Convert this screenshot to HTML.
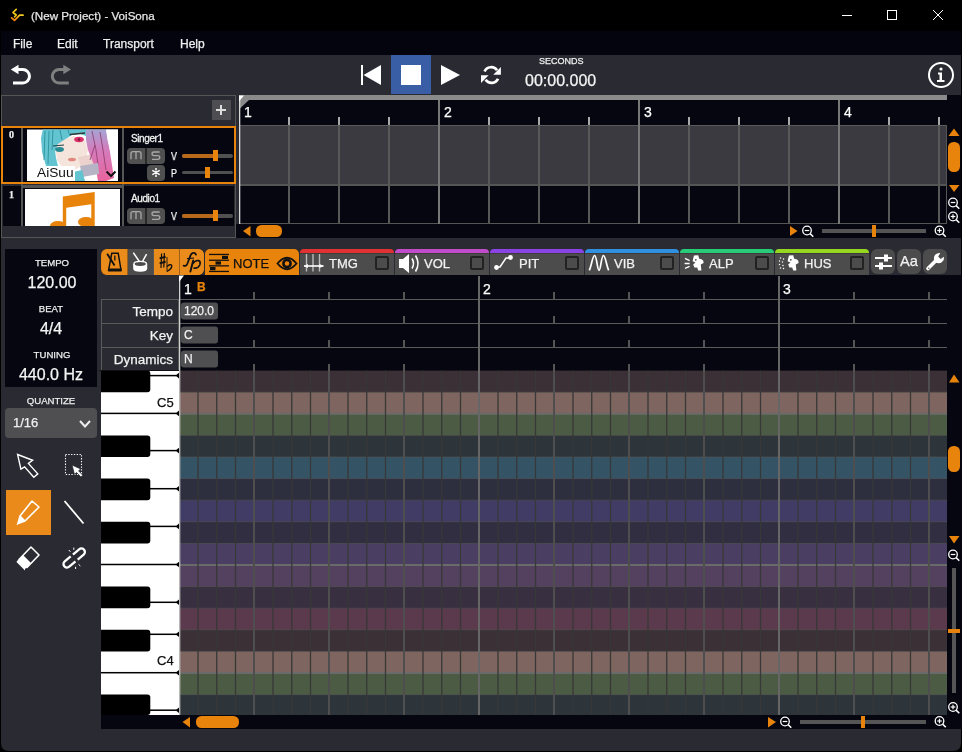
<!DOCTYPE html><html><head><meta charset="utf-8"><style>
html,body{margin:0;padding:0;}
body{width:962px;height:752px;position:relative;overflow:hidden;background:#000;font-family:"Liberation Sans",sans-serif;}
.t{position:absolute;white-space:nowrap;line-height:1;will-change:transform;-webkit-text-stroke:0.25px currentColor;}
svg{position:absolute;overflow:visible;}
</style></head><body>
<svg style="left:0;top:0" width="962" height="31">
<defs><linearGradient id="lg" x1="0" y1="1" x2="1" y2="0"><stop offset="0" stop-color="#f07810"/><stop offset="1" stop-color="#f0d020"/></linearGradient></defs>
<path d="M16.2 9.4 L13 12.5 L16.2 15 L14.6 16.8" stroke="#f0c818" stroke-width="1.7" fill="none" stroke-linecap="round" stroke-linejoin="round"/>
<path d="M11.6 17.9 L14.5 20.4 L19.6 15.2 L23 15.2" stroke="url(#lg)" stroke-width="1.8" fill="none" stroke-linecap="round" stroke-linejoin="round"/>
<line x1="842" y1="15.5" x2="852" y2="15.5" stroke="#fff" stroke-width="1"/>
<rect x="887.5" y="10.5" width="9" height="9" stroke="#fff" stroke-width="1" fill="none"/>
<path d="M933 10 L943 20 M943 10 L933 20" stroke="#fff" stroke-width="1"/>
</svg>
<div class="t" style="left:31px;top:10px;font-size:11.6px;color:#e6e6e6;">(New Project) - VoiSona</div>
<div style="position:absolute;left:1px;top:31px;width:960px;height:24px;background:#04040e;"></div>
<div class="t" style="left:13px;top:38px;font-size:12px;color:#f0f0f0;">File</div>
<div class="t" style="left:57px;top:38px;font-size:12px;color:#f0f0f0;">Edit</div>
<div class="t" style="left:103px;top:38px;font-size:12px;color:#f0f0f0;">Transport</div>
<div class="t" style="left:180px;top:38px;font-size:12px;color:#f0f0f0;">Help</div>
<div style="position:absolute;left:1px;top:55px;width:960px;height:40px;background:#2a2a32;"></div>
<svg style="left:0;top:55" width="962" height="40">
<path d="M17 14.5 L22.75 14.5 A 6.75 6.75 0 0 1 22.75 28 L13 28" stroke="#fff" stroke-width="3" fill="none"/>
<path d="M10.8 14.5 L18.5 9.8 L18.5 19.2 Z" fill="#fff"/>
<path d="M64.8 14.5 L59.05 14.5 A 6.75 6.75 0 0 0 59.05 28 L68.8 28" stroke="#808080" stroke-width="3" fill="none"/>
<path d="M71 14.5 L63.3 9.8 L63.3 19.2 Z" fill="#808080"/>
</svg>
<div style="position:absolute;left:391px;top:55px;width:40px;height:39px;background:#3a5ea6;"></div>
<svg style="left:0;top:55" width="962" height="40">
<rect x="361" y="10" width="2" height="20" fill="#fff"/>
<path d="M363.5 20 L381 10 L381 30 Z" fill="#fff"/>
<rect x="401" y="10" width="20" height="20" fill="#fff"/>
<path d="M441 10 L460 20 L441 30 Z" fill="#fff"/>
<path d="M484.6 16.4 A 7 6.6 0 0 1 497 15.2" stroke="#fff" stroke-width="2.7" fill="none"/>
<path d="M500.9 12 L500.9 19.8 L493.3 19.8 Z" fill="#fff"/>
<path d="M498 23.8 A 7 6.6 0 0 1 485.6 24.8" stroke="#fff" stroke-width="2.7" fill="none"/>
<path d="M481 20.3 L481 28 L488.6 20.3 Z" fill="#fff"/>
<circle cx="941" cy="20" r="12" stroke="#fff" stroke-width="2" fill="none"/>
<circle cx="941" cy="14" r="1.6" fill="#fff"/>
<path d="M938 17.5 L942 17.5 L942 25 L944.5 25 L944.5 27 L937 27 L937 25 L939.5 25 L939.5 19.5 L938 19.5 Z" fill="#fff"/>
</svg>
<div class="t" style="left:538.5px;top:57px;font-size:9px;color:#f0f0f0;">SECONDS</div>
<div class="t" style="left:525px;top:72.5px;font-size:16px;color:#f4f4f4;">00:00.000</div>
<div style="position:absolute;left:1px;top:95px;width:960px;height:143px;background:#05060f;"></div>
<div style="position:absolute;left:1px;top:95px;width:235px;height:143px;background:#2a2a32;"></div>
<div style="position:absolute;left:1px;top:95px;width:235px;height:1px;background:#555;"></div>
<div style="position:absolute;left:1px;top:95px;width:1px;height:143px;background:#555;"></div>
<div style="position:absolute;left:235px;top:95px;width:1px;height:143px;background:#555;"></div>
<div style="position:absolute;left:236px;top:95px;width:3px;height:143px;background:#2a2a32;"></div>
<div style="position:absolute;left:212px;top:100px;width:19px;height:20px;background:#4d4d52;"></div>
<div style="position:absolute;left:216px;top:109px;width:10px;height:2px;background:#ddd;"></div>
<div style="position:absolute;left:220px;top:105px;width:2px;height:10px;background:#ddd;"></div>
<div style="position:absolute;left:1px;top:126px;width:235px;height:58px;background:#e8830c;"></div>
<div style="position:absolute;left:3px;top:128px;width:231px;height:54px;background:#05060f;"></div>
<div style="position:absolute;left:21px;top:128px;width:2px;height:54px;background:#555;"></div>
<div style="position:absolute;left:122px;top:128px;width:2px;height:54px;background:#555;"></div>
<div class="t" style="left:8.5px;top:130px;font-size:10px;color:#eee;font-family:'Liberation Serif',serif;font-weight:bold">0</div>
<svg style="left:0;top:0" width="240" height="240">
<defs><clipPath id="ic"><rect x="27" y="129.5" width="91" height="51.5"/></clipPath>
<linearGradient id="pg" x1="0" y1="0" x2="0" y2="1"><stop offset="0" stop-color="#a4a6d4"/><stop offset="0.4" stop-color="#d47cbc"/><stop offset="1" stop-color="#e8649e"/></linearGradient></defs>
<rect x="27" y="129.5" width="91" height="51.5" fill="#fff"/>
<g clip-path="url(#ic)">
<path d="M55 144 L64 139 L74 136 L85 140 L88 150 L86 158 L82 166 L72 171 L62 167 L57 160 Z" fill="#f4e4dc"/>
<path d="M78 157 L93 154 L97 167 L82 171 Z" fill="#ecd2cc"/>
<path d="M43 129 L88 129 L86 136 L80 134 L72 135 L64 140 L58 144 L55 150 L56 158 L58 166 L52 170 L46 166 L42 152 L41 138 Z" fill="#62c4d0"/>
<path d="M45 131 L44 160 M49 131 L48 164 M53 130 L52 150 M60 130 L62 140 M68 130 L70 136" stroke="#2e8e98" stroke-width="0.9" fill="none"/>
<path d="M86 129 L106 129 L108 140 L110 152 L112 165 L114 178 L106 181 L98 181 L96 170 L92 160 L88 150 L86 140 Z" fill="url(#pg)"/>
<path d="M92 131 L96 150 L98 165 M100 132 L103 150 L106 170 M95 145 L90 160" stroke="#8a3a6a" stroke-width="0.8" fill="none"/>
<path d="M106 129 L118 129 L118 156 L110 150 L107.5 140 Z" fill="#fff"/>
<path d="M112 158 L118 160 L118 170 L114 168 Z" fill="#fff"/>
<path d="M80 166 L98 163 L99 174 L82 177 Z" fill="#b6b4c4"/>
<path d="M73 172 L82 170 L85 181 L71 181 Z" fill="#62c4d0"/>
<path d="M70 134.5 L85 133" stroke="#333" stroke-width="1.3"/>
<ellipse cx="79" cy="139.5" rx="4.8" ry="2.8" fill="#d8306a"/>
<circle cx="79" cy="139.5" r="1.2" fill="#801838"/>
<path d="M53 146 L64 145" stroke="#244248" stroke-width="1.2"/>
<ellipse cx="59.5" cy="149.5" rx="4.4" ry="2.4" fill="#2a8a94"/>
<ellipse cx="72" cy="159.5" rx="4" ry="1.8" fill="#e0887c"/>
</g>
<rect x="37" y="166" width="38" height="15" fill="#fff"/>
<path d="M106.5 171.5 L111 176 L115.5 171.5" stroke="#111" stroke-width="2" fill="none"/>
</svg>
<div class="t" style="left:37px;top:165.5px;font-size:13.7px;color:#111;-webkit-text-stroke:0">AiSuu</div>
<div class="t" style="left:131px;top:133.5px;font-size:10px;color:#f2f2f2;-webkit-text-stroke:0.3px #f2f2f2;letter-spacing:-0.4px">Singer1</div>
<div style="position:absolute;left:127px;top:148px;width:38px;height:16px;background:#505050;border-radius:4px"></div>
<div style="position:absolute;left:145.2px;top:148px;width:1.5px;height:16px;background:#2a2a2a;"></div>
<div style="position:absolute;left:147px;top:165px;width:18px;height:16px;background:#505050;border-radius:4px"></div>
<svg style="left:0;top:0" width="240" height="240">
<path d="M131 159.2 L131 153.6 Q 131 151.6 133 151.6 L139 151.6 Q 141 151.6 141 153.6 L141 159.2 M136 152 L136 159.2" stroke="#a8a8a8" stroke-width="1.3" fill="none"/>
<path d="M159.6 152 L154 152 Q 152 152 152 153.8 Q 152 155.6 154 155.6 L157.8 155.6 Q 159.8 155.6 159.8 157.5 Q 159.8 159.3 157.8 159.3 L152 159.3" stroke="#a8a8a8" stroke-width="1.3" fill="none"/>
<path d="M152.3 170.4 L159.7 174.6 M159.7 170.4 L152.3 174.6 M156 170.5 L156 174.5" stroke="#fff" stroke-width="1.3"/>
<circle cx="156" cy="168.9" r="1" fill="#fff"/><circle cx="156" cy="176.1" r="1" fill="#fff"/>
</svg>
<div class="t" style="left:170.6px;top:150.8px;font-size:10.5px;color:#fff;transform:scaleX(0.85);transform-origin:left">V</div>
<div class="t" style="left:170.6px;top:168.2px;font-size:10.5px;color:#fff;transform:scaleX(0.85);transform-origin:left">P</div>
<div style="position:absolute;left:182px;top:154px;width:51px;height:4px;background:#505050;border-radius:2px"></div>
<div style="position:absolute;left:182px;top:154px;width:33px;height:4px;background:#b86a1a;border-radius:2px"></div>
<div style="position:absolute;left:213px;top:150px;width:5px;height:11px;background:#e8830c;"></div>
<div style="position:absolute;left:182px;top:171px;width:51px;height:3px;background:#505050;border-radius:2px"></div>
<div style="position:absolute;left:205px;top:167px;width:5px;height:11px;background:#e8830c;"></div>
<div style="position:absolute;left:3px;top:186px;width:231px;height:40px;background:#05060f;"></div>
<div style="position:absolute;left:21px;top:184px;width:2px;height:42px;background:#555;"></div>
<div style="position:absolute;left:122px;top:184px;width:2px;height:42px;background:#555;"></div>
<div style="position:absolute;left:23px;top:185px;width:99px;height:3px;background:#555;"></div>
<div class="t" style="left:9px;top:190px;font-size:10px;color:#eee;font-family:'Liberation Serif',serif;font-weight:bold">1</div>
<div style="position:absolute;left:25px;top:189px;width:95px;height:37px;background:#fff;"></div>
<svg style="left:0;top:0" width="240" height="240">
<path d="M64.5 226 L64.5 198 L93 194 L93 226" stroke="#e8830c" stroke-width="3.4" fill="none"/>
<path d="M64.5 198 L93 194 L93 204 L64.5 208 Z" fill="#e8830c"/>
<ellipse cx="58" cy="226" rx="8" ry="5" fill="#e8830c"/>
<ellipse cx="86" cy="222" rx="8" ry="5" fill="#e8830c"/>
</svg>
<div class="t" style="left:131px;top:193.5px;font-size:10px;color:#f2f2f2;-webkit-text-stroke:0.3px #f2f2f2;letter-spacing:-0.4px">Audio1</div>
<div style="position:absolute;left:127px;top:208px;width:38px;height:16px;background:#505050;border-radius:4px"></div>
<div style="position:absolute;left:145.2px;top:208px;width:1.5px;height:16px;background:#2a2a2a;"></div>
<svg style="left:0;top:0" width="240" height="240">
<path d="M131 219.2 L131 213.6 Q 131 211.6 133 211.6 L139 211.6 Q 141 211.6 141 213.6 L141 219.2 M136 212 L136 219.2" stroke="#a8a8a8" stroke-width="1.3" fill="none"/>
<path d="M159.6 212 L154 212 Q 152 212 152 213.8 Q 152 215.6 154 215.6 L157.8 215.6 Q 159.8 215.6 159.8 217.5 Q 159.8 219.3 157.8 219.3 L152 219.3" stroke="#a8a8a8" stroke-width="1.3" fill="none"/>
</svg>
<div class="t" style="left:170.6px;top:210.8px;font-size:10.5px;color:#fff;transform:scaleX(0.85);transform-origin:left">V</div>
<div style="position:absolute;left:182px;top:214px;width:51px;height:4px;background:#505050;border-radius:2px"></div>
<div style="position:absolute;left:182px;top:214px;width:33px;height:4px;background:#b86a1a;border-radius:2px"></div>
<div style="position:absolute;left:213px;top:210px;width:5px;height:11px;background:#e8830c;"></div>
<div style="position:absolute;left:2px;top:226px;width:233px;height:11px;background:#2a2a32;"></div>
<div style="position:absolute;left:1px;top:237px;width:235px;height:1px;background:#555;"></div>
<div style="position:absolute;left:236px;top:224px;width:725px;height:14px;background:#05060f;"></div>
<svg style="left:0;top:0" width="962" height="240"><path d="M239 95 L947 95 L947 100 L249 100 L240 108.5 L239 108.5 Z" fill="#8a8a8a"/><rect x="239" y="126" width="708" height="58" fill="#3a3a40"/><rect x="239" y="125" width="708" height="1" fill="#5a5a5a"/><rect x="239" y="184" width="708" height="2" fill="#555"/><rect x="239" y="223" width="708" height="1" fill="#555"/><rect x="946" y="125" width="1" height="99" fill="#555"/><rect x="288" y="117" width="2" height="8" fill="#aaa"/><rect x="288" y="126" width="2" height="97" fill="#585858"/><rect x="338" y="117" width="2" height="8" fill="#aaa"/><rect x="338" y="126" width="2" height="97" fill="#585858"/><rect x="388" y="117" width="2" height="8" fill="#aaa"/><rect x="388" y="126" width="2" height="97" fill="#585858"/><rect x="438" y="100" width="2" height="124" fill="#777"/><rect x="488" y="117" width="2" height="8" fill="#aaa"/><rect x="488" y="126" width="2" height="97" fill="#585858"/><rect x="538" y="117" width="2" height="8" fill="#aaa"/><rect x="538" y="126" width="2" height="97" fill="#585858"/><rect x="588" y="117" width="2" height="8" fill="#aaa"/><rect x="588" y="126" width="2" height="97" fill="#585858"/><rect x="638" y="100" width="2" height="124" fill="#777"/><rect x="688" y="117" width="2" height="8" fill="#aaa"/><rect x="688" y="126" width="2" height="97" fill="#585858"/><rect x="738" y="117" width="2" height="8" fill="#aaa"/><rect x="738" y="126" width="2" height="97" fill="#585858"/><rect x="788" y="117" width="2" height="8" fill="#aaa"/><rect x="788" y="126" width="2" height="97" fill="#585858"/><rect x="838" y="100" width="2" height="124" fill="#777"/><rect x="888" y="117" width="2" height="8" fill="#aaa"/><rect x="888" y="126" width="2" height="97" fill="#585858"/><rect x="938" y="117" width="2" height="8" fill="#aaa"/><rect x="938" y="126" width="2" height="97" fill="#585858"/><rect x="239" y="100" width="1.3" height="124" fill="#d8d8d8"/><path d="M239 95.5 L244 95.5 L239 101.5 Z" fill="#fff"/><path d="M243 231 L250.5 226 L250.5 236.5 Z" fill="#e8830c"/><rect x="256" y="225" width="26" height="12" rx="5.5" fill="#e8830c"/><path d="M790 226 L797.5 231 L790 236 Z" fill="#e8830c"/><rect x="822" y="229" width="104" height="4" fill="#555"/><rect x="872" y="225" width="4" height="12" fill="#e8830c"/><path d="M948.5 136 L954 128.5 L959.5 136 Z" fill="#e8830c"/><rect x="948" y="142" width="12" height="30" rx="5.5" fill="#e8830c"/><path d="M949 185 L959.5 185 L954 192 Z" fill="#e8830c"/></svg>
<div class="t" style="left:244px;top:105px;font-size:14px;color:#fff;">1</div>
<div class="t" style="left:444px;top:105px;font-size:14px;color:#fff;">2</div>
<div class="t" style="left:644px;top:105px;font-size:14px;color:#fff;">3</div>
<div class="t" style="left:844px;top:105px;font-size:14px;color:#fff;">4</div>
<svg style="left:0;top:0" width="962" height="752"><circle cx="807" cy="230.5" r="4.3" stroke="#fff" stroke-width="1.3" fill="none"/><line x1="810.096" y1="233.596" x2="813.296" y2="236.796" stroke="#fff" stroke-width="1.5"/><line x1="804.7" y1="230.5" x2="809.3" y2="230.5" stroke="#fff" stroke-width="1.2"/><circle cx="939.5" cy="230.5" r="4.3" stroke="#fff" stroke-width="1.3" fill="none"/><line x1="942.596" y1="233.596" x2="945.796" y2="236.796" stroke="#fff" stroke-width="1.5"/><line x1="937.2" y1="230.5" x2="941.8" y2="230.5" stroke="#fff" stroke-width="1.2"/><line x1="939.5" y1="228.2" x2="939.5" y2="232.8" stroke="#fff" stroke-width="1.2"/><circle cx="953" cy="202.5" r="4.3" stroke="#fff" stroke-width="1.3" fill="none"/><line x1="956.096" y1="205.596" x2="959.296" y2="208.796" stroke="#fff" stroke-width="1.5"/><line x1="950.7" y1="202.5" x2="955.3" y2="202.5" stroke="#fff" stroke-width="1.2"/><circle cx="953" cy="216.5" r="4.3" stroke="#fff" stroke-width="1.3" fill="none"/><line x1="956.096" y1="219.596" x2="959.296" y2="222.796" stroke="#fff" stroke-width="1.5"/><line x1="950.7" y1="216.5" x2="955.3" y2="216.5" stroke="#fff" stroke-width="1.2"/><line x1="953" y1="214.2" x2="953" y2="218.8" stroke="#fff" stroke-width="1.2"/></svg>
<div style="position:absolute;left:1px;top:238px;width:960px;height:513px;background:#2a2a32;"></div>
<div style="position:absolute;left:5px;top:249px;width:92px;height:138px;background:#05060f;"></div>
<div class="t" style="left:-48.5px;width:200px;text-align:center;top:258px;font-size:9.6px;color:#eee;">TEMPO</div>
<div class="t" style="left:-48.5px;width:200px;text-align:center;top:275px;font-size:16px;color:#f4f4f4;">120.00</div>
<div class="t" style="left:-49px;width:200px;text-align:center;top:304px;font-size:9.6px;color:#eee;">BEAT</div>
<div class="t" style="left:-49px;width:200px;text-align:center;top:321px;font-size:16px;color:#f4f4f4;">4/4</div>
<div class="t" style="left:-48.5px;width:200px;text-align:center;top:350px;font-size:9.6px;color:#eee;">TUNING</div>
<div class="t" style="left:-49px;width:200px;text-align:center;top:367px;font-size:16px;color:#f4f4f4;">440.0 Hz</div>
<div class="t" style="left:-49px;width:200px;text-align:center;top:396px;font-size:9.6px;color:#eee;">QUANTIZE</div>
<div style="position:absolute;left:5px;top:408px;width:92px;height:30px;background:#4f4f52;border-radius:4px"></div>
<div class="t" style="left:13px;top:416px;font-size:13px;color:#f0f0f0;">1/16</div>
<svg style="left:0;top:0" width="962" height="752">
<path d="M80 421 L85 426.5 L90 421" stroke="#eee" stroke-width="2" fill="none"/>
</svg>
<div style="position:absolute;left:5.5px;top:489.5px;width:45.5px;height:45px;background:#e98a1b;"></div>
<svg style="left:0;top:0" width="120" height="600">
<path d="M17.6 454.5 L32.6 460.3 L28.4 463.4 L37.8 473.9 L33.8 477.3 L24.6 466.9 L20.9 469.2 Z" stroke="#fff" stroke-width="1.4" fill="none" stroke-linejoin="miter"/>
<rect x="65.5" y="454.5" width="16" height="20" stroke="#fff" stroke-width="1.1" stroke-dasharray="1.3 1.5" fill="none"/>
<path d="M72 465 L80.8 469 L78.6 470.8 L82.8 475.2 L80.8 477 L76.6 472.6 L74.5 474.4 Z" fill="#fff" stroke="#2a2a32" stroke-width="0.8"/>
<path d="M32 501 L39 507 L25 521 L18 523.5 L20 516 Z" stroke="#fff" stroke-width="1.6" fill="none" stroke-linejoin="round"/>
<path d="M20 516 L25 521 M18 523.5 L21 518 L23.5 520.5 Z" stroke="#fff" stroke-width="1.4" fill="#fff"/>
<line x1="64.5" y1="501" x2="83.5" y2="523.5" stroke="#fff" stroke-width="1.8"/>
<path d="M31 547 L39 555 L27 567.5 L19 559.5 Z" stroke="#fff" stroke-width="1.6" fill="none" stroke-linejoin="round"/>
<path d="M17 561 L25 569 L25 570.5 L16.5 562 Z M17 561 L23 555 L31 563 L25 569 Z" fill="#fff"/>
<g transform="translate(74.2 558) rotate(-40)">
<path d="M 0.6 -3.5 L -9.4 -3.5 A 3.5 3.5 0 0 0 -9.4 3.5 L -1.2 3.5" stroke="#fff" stroke-width="2.3" fill="none"/>
<path d="M 1.2 -3.5 L 9.4 -3.5 A 3.5 3.5 0 0 1 9.4 3.5 L -0.6 3.5" stroke="#fff" stroke-width="2.3" fill="none"/>
<rect x="-1.6" y="-5" width="2.6" height="3" fill="#2a2a32"/>
<rect x="-1" y="2" width="2.6" height="3" fill="#2a2a32"/>
</g>
<path d="M68.8 550 L70.4 551.8 M73.8 547.6 L73.8 549.8 M75.6 566.8 L75.6 569 M78.6 564.4 L80.4 566" stroke="#fff" stroke-width="1"/>
</svg>
<div style="position:absolute;left:101px;top:249px;width:103px;height:26px;background:#e8830c;border-radius:6px"></div>
<div style="position:absolute;left:101.5px;top:249px;width:25px;height:26px;background:#ea8c1c;border-radius:6px 0 0 6px"></div>
<div style="position:absolute;left:127.5px;top:249px;width:25px;height:26px;background:#4c4c4c;"></div>
<div style="position:absolute;left:153.5px;top:249px;width:25px;height:26px;background:#ea8c1c;"></div>
<div style="position:absolute;left:179.5px;top:249px;width:24.5px;height:26px;background:#ea8c1c;border-radius:0 6px 6px 0"></div>
<div style="position:absolute;left:126.5px;top:249px;width:1px;height:26px;background:#a0601a;"></div>
<div style="position:absolute;left:152.5px;top:249px;width:1px;height:26px;background:#555;"></div>
<div style="position:absolute;left:178.5px;top:249px;width:1px;height:26px;background:#a0601a;"></div>
<div style="position:absolute;left:205px;top:249px;width:94px;height:26px;background:#e8830c;border-radius:5px 5px 0 0"></div>
<div style="position:absolute;left:300px;top:249px;width:94px;height:26px;background:#4c4c4c;border-radius:5px 5px 0 0"></div>
<div style="position:absolute;left:300px;top:249px;width:94px;height:4px;background:#e03232;border-radius:5px 5px 0 0"></div>
<div style="position:absolute;left:300px;top:253px;width:94px;height:1px;background:#3e3a3a;"></div>
<div style="position:absolute;left:395px;top:249px;width:94px;height:26px;background:#4c4c4c;border-radius:5px 5px 0 0"></div>
<div style="position:absolute;left:395px;top:249px;width:94px;height:4px;background:#c04ccc;border-radius:5px 5px 0 0"></div>
<div style="position:absolute;left:395px;top:253px;width:94px;height:1px;background:#3e3a3a;"></div>
<div style="position:absolute;left:490px;top:249px;width:94px;height:26px;background:#4c4c4c;border-radius:5px 5px 0 0"></div>
<div style="position:absolute;left:490px;top:249px;width:94px;height:4px;background:#8a44e6;border-radius:5px 5px 0 0"></div>
<div style="position:absolute;left:490px;top:253px;width:94px;height:1px;background:#3e3a3a;"></div>
<div style="position:absolute;left:585px;top:249px;width:94px;height:26px;background:#4c4c4c;border-radius:5px 5px 0 0"></div>
<div style="position:absolute;left:585px;top:249px;width:94px;height:4px;background:#3090e0;border-radius:5px 5px 0 0"></div>
<div style="position:absolute;left:585px;top:253px;width:94px;height:1px;background:#3e3a3a;"></div>
<div style="position:absolute;left:680px;top:249px;width:94px;height:26px;background:#4c4c4c;border-radius:5px 5px 0 0"></div>
<div style="position:absolute;left:680px;top:249px;width:94px;height:4px;background:#28cc78;border-radius:5px 5px 0 0"></div>
<div style="position:absolute;left:680px;top:253px;width:94px;height:1px;background:#3e3a3a;"></div>
<div style="position:absolute;left:775px;top:249px;width:94px;height:26px;background:#4c4c4c;border-radius:5px 5px 0 0"></div>
<div style="position:absolute;left:775px;top:249px;width:94px;height:4px;background:#96d820;border-radius:5px 5px 0 0"></div>
<div style="position:absolute;left:775px;top:253px;width:94px;height:1px;background:#3e3a3a;"></div>
<div style="position:absolute;left:871px;top:249px;width:24px;height:25px;background:#4c4c4c;border-radius:6px"></div>
<div style="position:absolute;left:897px;top:249px;width:24px;height:25px;background:#4c4c4c;border-radius:6px"></div>
<div style="position:absolute;left:923px;top:249px;width:24px;height:25px;background:#4c4c4c;border-radius:6px"></div>
<div class="t" style="left:232.8px;top:257px;font-size:13px;color:#111;">NOTE</div>
<div class="t" style="left:329px;top:257px;font-size:13px;color:#f2f2f2;">TMG</div>
<div style="position:absolute;left:375px;top:256px;width:14px;height:14px;background:#4c4c4c;box-sizing:border-box;border:2px solid #222;border-radius:2px"></div>
<div class="t" style="left:424px;top:257px;font-size:13px;color:#f2f2f2;">VOL</div>
<div style="position:absolute;left:470px;top:256px;width:14px;height:14px;background:#4c4c4c;box-sizing:border-box;border:2px solid #222;border-radius:2px"></div>
<div class="t" style="left:519px;top:257px;font-size:13px;color:#f2f2f2;">PIT</div>
<div style="position:absolute;left:565px;top:256px;width:14px;height:14px;background:#4c4c4c;box-sizing:border-box;border:2px solid #222;border-radius:2px"></div>
<div class="t" style="left:614px;top:257px;font-size:13px;color:#f2f2f2;">VIB</div>
<div style="position:absolute;left:660px;top:256px;width:14px;height:14px;background:#4c4c4c;box-sizing:border-box;border:2px solid #222;border-radius:2px"></div>
<div class="t" style="left:709px;top:257px;font-size:13px;color:#f2f2f2;">ALP</div>
<div style="position:absolute;left:755px;top:256px;width:14px;height:14px;background:#4c4c4c;box-sizing:border-box;border:2px solid #222;border-radius:2px"></div>
<div class="t" style="left:804px;top:257px;font-size:13px;color:#f2f2f2;">HUS</div>
<div style="position:absolute;left:850px;top:256px;width:14px;height:14px;background:#4c4c4c;box-sizing:border-box;border:2px solid #222;border-radius:2px"></div>
<div class="t" style="left:900px;top:253.5px;font-size:14.6px;color:#f2f2f2;">Aa</div>
<svg style="left:0;top:0" width="962" height="300">
<!-- metronome -->
<path d="M111.8 253.2 L118.2 253.2 L121 270 L108.6 270 Z" stroke="#111" stroke-width="1.5" fill="none" stroke-linejoin="miter"/>
<path d="M108.4 268.4 L121.4 268.4 L121.6 271.4 L108.2 271.4 Z" fill="#111"/>
<rect x="114.2" y="255.5" width="1.3" height="5" fill="#111"/>
<line x1="107.2" y1="253.8" x2="114.6" y2="265.4" stroke="#111" stroke-width="1.9"/>
<!-- drum -->
<line x1="133.3" y1="252.6" x2="140" y2="262.5" stroke="#fff" stroke-width="1.5"/>
<line x1="146.6" y1="254.2" x2="140.8" y2="264.5" stroke="#fff" stroke-width="1.5"/>
<path d="M133.2 264 L133.2 268.5 Q 133.2 271.8 140.2 271.8 Q 147.2 271.8 147.2 268.5 L147.2 264 Z" fill="#fff"/>
<ellipse cx="140.2" cy="264" rx="6.3" ry="2.6" stroke="#fff" stroke-width="1.4" fill="#4c4c4c"/>
<!-- NOTE icon -->
<rect x="209" y="253.8" width="20" height="1.3" fill="#111"/>
<rect x="209" y="259.6" width="20" height="1.3" fill="#111"/>
<rect x="209" y="265.2" width="20" height="1.3" fill="#111"/>
<rect x="209" y="270.8" width="20" height="1.3" fill="#111"/>
<rect x="222" y="255.8" width="6" height="3.2" fill="#111"/>
<rect x="215.5" y="261.4" width="5.5" height="3.2" fill="#111"/>
<rect x="210" y="267" width="5.5" height="3.2" fill="#111"/>
<!-- eye -->
<path d="M277.5 263.5 Q 287 252 296.5 263.5 Q 287 275 277.5 263.5 Z" stroke="#111" stroke-width="1.8" fill="none"/>
<circle cx="287" cy="263.5" r="3.6" fill="none" stroke="#111" stroke-width="2.6"/>
<!-- TMG -->
<path d="M306.5 254 L306.5 271.5 M313 254 L313 271.5 M319.5 254 L319.5 271.5" stroke="#bbb" stroke-width="1.4"/>
<path d="M304 266 L323.5 266" stroke="#fff" stroke-width="1.6"/>
<path d="M304 266 L308 264 L308 268 Z M323.5 266 L319.5 264 L319.5 268 Z" fill="#fff"/>
<!-- VOL speaker -->
<path d="M399 259 L403 259 L409 254 L409 273 L403 268 L399 268 Z" fill="#fff"/>
<path d="M412 258.5 Q 415 263.5 412 268.5" stroke="#fff" stroke-width="1.6" fill="none"/>
<path d="M415.5 255.5 Q 420.5 263.5 415.5 271.5" stroke="#fff" stroke-width="1.6" fill="none"/>
<!-- PIT -->
<path d="M496 267 L500 267 L506 258 L510 258" stroke="#fff" stroke-width="1.5" fill="none"/>
<circle cx="496.5" cy="267.5" r="2.4" fill="#fff"/>
<circle cx="510.5" cy="257.5" r="2.4" fill="#fff"/>
<!-- VIB -->
<path d="M589.3 270.3 C 591.5 266, 592.5 255.5, 594.6 255.5 C 596.8 255.5, 597.2 270.3, 599 270.3 C 600.8 270.3, 601.3 255.5, 603.4 255.5 C 605.5 255.5, 606.5 266, 608.7 270.3" stroke="#fff" stroke-width="1.7" fill="none"/>
<!-- ALP -->
<path d="M685 258.3 L689.6 260.6 M684.6 263.5 L689.6 263.5 M685 268.4 L689.6 266.4" stroke="#fff" stroke-width="1.3"/>
<path d="M694 255.5 L698.2 255.3 L699.2 258.8 L701.6 259.3 Q 704 260.3 703.6 263 L700.8 264.6 L701.4 270.6 L698.2 270.6 L697.2 267.4 L694.4 267.6 L693.2 264.6 L695.4 262.6 L692.6 261.2 L693.2 258.6 Z" fill="#fff"/>
<circle cx="695.8" cy="259.8" r="0.9" fill="#4c4c4c"/>
<!-- HUS -->
<circle cx="780.5" cy="258" r="0.75" fill="#fff"/><circle cx="783.5" cy="259" r="0.75" fill="#fff"/><circle cx="779.5" cy="261" r="0.75" fill="#fff"/><circle cx="782.5" cy="262" r="0.75" fill="#fff"/><circle cx="779.5" cy="264.5" r="0.75" fill="#fff"/><circle cx="783" cy="265.5" r="0.75" fill="#fff"/><circle cx="780.5" cy="268" r="0.75" fill="#fff"/><circle cx="783.5" cy="268.5" r="0.75" fill="#fff"/>
<path d="M789 255.5 L793.2 255.3 L794.2 258.8 L796.6 259.3 Q 799 260.3 798.6 263 L795.8 264.6 L796.4 270.6 L793.2 270.6 L792.2 267.4 L789.4 267.6 L788.2 264.6 L790.4 262.6 L787.6 261.2 L788.2 258.6 Z" fill="#fff"/>
<circle cx="790.8" cy="259.8" r="0.9" fill="#4c4c4c"/>
<!-- sliders -->
<path d="M875 258 L892 258 M875 266 L892 266" stroke="#fff" stroke-width="2"/>
<rect x="884" y="254.5" width="4" height="7" fill="#fff"/>
<rect x="879" y="262.5" width="4" height="7" fill="#fff"/>
<!-- wrench -->
<path d="M928 268.5 L936 260.5" stroke="#fff" stroke-width="3.6" stroke-linecap="round"/>
<circle cx="928.8" cy="268.2" r="0.7" fill="#4c4c4c"/>
<path d="M935 262 Q 932.5 257.5 935.5 254.5 Q 937.5 252.5 940.3 253 L 938.2 256.5 L 940.5 259 L 944 256.8 Q 944.5 260 942 262 Q 939 264.5 935 262 Z" fill="#fff"/>
</svg>
<svg style="left:0;top:0" width="962" height="300">
<path d="M161.6 253.5 L161 268 M164.4 253 L163.8 267.5" stroke="#111" stroke-width="1.2"/>
<path d="M159.6 258.4 L165.6 256.8 M159.6 263.4 L165.6 261.8" stroke="#111" stroke-width="2"/>
<path d="M167 257 L167 271.5" stroke="#111" stroke-width="0.9"/>
<path d="M167 266.5 Q 170.5 263.5 171.8 265.5 Q 172.2 268.5 167 271.5" stroke="#111" stroke-width="1.3" fill="none"/>
<path d="M196 254.6 Q 195 252.2 192.6 253 Q 190.6 254 189.6 258 L 187.2 264 Q 186 266.8 183.6 265.6" stroke="#111" stroke-width="1.8" fill="none" stroke-linecap="round"/>
<path d="M187 258.6 L194 258" stroke="#111" stroke-width="1.1"/>
<path d="M193.2 260.5 L190.4 271.5" stroke="#111" stroke-width="1.9" stroke-linecap="round"/>
<path d="M192.6 263.8 Q 195.5 260 198.6 260.6 Q 201 261.6 199.8 265 Q 198 268.8 193.4 268" stroke="#111" stroke-width="1.6" fill="none"/>
</svg>
<div style="position:absolute;left:179px;top:275px;width:783px;height:454px;background:#05060f;"></div>
<div style="position:absolute;left:101px;top:715px;width:861px;height:14px;background:#05060f;"></div>
<div style="position:absolute;left:101px;top:299px;width:78px;height:25px;background:#2a2a32;box-sizing:border-box;border:1px solid #5a5a5a"></div>
<div class="t" style="left:101px;width:72px;text-align:right;top:304.6px;font-size:13.5px;color:#f2f2f2">Tempo</div>
<div style="position:absolute;left:101px;top:323px;width:78px;height:25px;background:#2a2a32;box-sizing:border-box;border:1px solid #5a5a5a"></div>
<div class="t" style="left:101px;width:72px;text-align:right;top:328.6px;font-size:13.5px;color:#f2f2f2">Key</div>
<div style="position:absolute;left:101px;top:347px;width:78px;height:25px;background:#2a2a32;box-sizing:border-box;border:1px solid #5a5a5a"></div>
<div class="t" style="left:101px;width:72px;text-align:right;top:352.6px;font-size:13.5px;color:#f2f2f2">Dynamics</div>
<svg style="left:0;top:0" width="962" height="752"><rect x="179" y="299" width="768" height="1" fill="#5a5a5a"/><rect x="179" y="323" width="768" height="1" fill="#5a5a5a"/><rect x="179" y="347" width="768" height="1" fill="#5a5a5a"/><rect x="180" y="370.60" width="767" height="22.00" fill="#3a3036"/><rect x="180" y="392.20" width="767" height="22.00" fill="#7f655f"/><rect x="180" y="413.80" width="767" height="22.00" fill="#4c5c44"/><rect x="180" y="435.40" width="767" height="22.00" fill="#2d353b"/><rect x="180" y="457.00" width="767" height="22.00" fill="#345466"/><rect x="180" y="478.60" width="767" height="22.00" fill="#2d2f3f"/><rect x="180" y="500.20" width="767" height="22.00" fill="#403c66"/><rect x="180" y="521.80" width="767" height="22.00" fill="#302e40"/><rect x="180" y="543.40" width="767" height="22.00" fill="#4a3f63"/><rect x="180" y="565.00" width="767" height="22.00" fill="#54405f"/><rect x="180" y="586.60" width="767" height="22.00" fill="#383040"/><rect x="180" y="608.20" width="767" height="22.00" fill="#5a3a4c"/><rect x="180" y="629.80" width="767" height="22.00" fill="#3a3036"/><rect x="180" y="651.40" width="767" height="22.00" fill="#7f655f"/><rect x="180" y="673.00" width="767" height="22.00" fill="#4c5c44"/><rect x="180" y="694.60" width="767" height="20.40" fill="#2d353b"/><rect x="180" y="391.70" width="767" height="1" fill="#555" opacity="0.6"/><rect x="180" y="434.90" width="767" height="1" fill="#555" opacity="0.6"/><rect x="180" y="456.50" width="767" height="1" fill="#555" opacity="0.6"/><rect x="180" y="478.10" width="767" height="1" fill="#555" opacity="0.6"/><rect x="180" y="499.70" width="767" height="1" fill="#555" opacity="0.6"/><rect x="180" y="521.30" width="767" height="1" fill="#555" opacity="0.6"/><rect x="180" y="542.90" width="767" height="1" fill="#555" opacity="0.6"/><rect x="180" y="586.10" width="767" height="1" fill="#555" opacity="0.6"/><rect x="180" y="607.70" width="767" height="1" fill="#555" opacity="0.6"/><rect x="180" y="629.30" width="767" height="1" fill="#555" opacity="0.6"/><rect x="180" y="650.90" width="767" height="1" fill="#555" opacity="0.6"/><rect x="180" y="694.10" width="767" height="1" fill="#555" opacity="0.6"/><rect x="180" y="412.80" width="767" height="2" fill="#6a6a6a"/><rect x="180" y="564.00" width="767" height="2" fill="#6a6a6a"/><rect x="180" y="672.00" width="767" height="2" fill="#6a6a6a"/><rect x="197.35" y="370.6" width="1.3" height="344.4" fill="#383838"/><rect x="216.10" y="370.6" width="1.3" height="344.4" fill="#383838"/><rect x="234.85" y="370.6" width="1.3" height="344.4" fill="#383838"/><rect x="253.00" y="370.6" width="2" height="344.4" fill="#4e4e4e"/><rect x="253.00" y="292" width="2" height="7" fill="#555"/><rect x="253.00" y="316" width="2" height="7" fill="#555"/><rect x="253.00" y="340" width="2" height="7" fill="#555"/><rect x="253.00" y="364" width="2" height="7" fill="#555"/><rect x="272.35" y="370.6" width="1.3" height="344.4" fill="#383838"/><rect x="291.10" y="370.6" width="1.3" height="344.4" fill="#383838"/><rect x="309.85" y="370.6" width="1.3" height="344.4" fill="#383838"/><rect x="328.00" y="370.6" width="2" height="344.4" fill="#4e4e4e"/><rect x="328.00" y="292" width="2" height="7" fill="#555"/><rect x="328.00" y="316" width="2" height="7" fill="#555"/><rect x="328.00" y="340" width="2" height="7" fill="#555"/><rect x="328.00" y="364" width="2" height="7" fill="#555"/><rect x="347.35" y="370.6" width="1.3" height="344.4" fill="#383838"/><rect x="366.10" y="370.6" width="1.3" height="344.4" fill="#383838"/><rect x="384.85" y="370.6" width="1.3" height="344.4" fill="#383838"/><rect x="403.00" y="370.6" width="2" height="344.4" fill="#4e4e4e"/><rect x="403.00" y="292" width="2" height="7" fill="#555"/><rect x="403.00" y="316" width="2" height="7" fill="#555"/><rect x="403.00" y="340" width="2" height="7" fill="#555"/><rect x="403.00" y="364" width="2" height="7" fill="#555"/><rect x="422.35" y="370.6" width="1.3" height="344.4" fill="#383838"/><rect x="441.10" y="370.6" width="1.3" height="344.4" fill="#383838"/><rect x="459.85" y="370.6" width="1.3" height="344.4" fill="#383838"/><rect x="478.00" y="276" width="2" height="439" fill="#666"/><rect x="497.35" y="370.6" width="1.3" height="344.4" fill="#383838"/><rect x="516.10" y="370.6" width="1.3" height="344.4" fill="#383838"/><rect x="534.85" y="370.6" width="1.3" height="344.4" fill="#383838"/><rect x="553.00" y="370.6" width="2" height="344.4" fill="#4e4e4e"/><rect x="553.00" y="292" width="2" height="7" fill="#555"/><rect x="553.00" y="316" width="2" height="7" fill="#555"/><rect x="553.00" y="340" width="2" height="7" fill="#555"/><rect x="553.00" y="364" width="2" height="7" fill="#555"/><rect x="572.35" y="370.6" width="1.3" height="344.4" fill="#383838"/><rect x="591.10" y="370.6" width="1.3" height="344.4" fill="#383838"/><rect x="609.85" y="370.6" width="1.3" height="344.4" fill="#383838"/><rect x="628.00" y="370.6" width="2" height="344.4" fill="#4e4e4e"/><rect x="628.00" y="292" width="2" height="7" fill="#555"/><rect x="628.00" y="316" width="2" height="7" fill="#555"/><rect x="628.00" y="340" width="2" height="7" fill="#555"/><rect x="628.00" y="364" width="2" height="7" fill="#555"/><rect x="647.35" y="370.6" width="1.3" height="344.4" fill="#383838"/><rect x="666.10" y="370.6" width="1.3" height="344.4" fill="#383838"/><rect x="684.85" y="370.6" width="1.3" height="344.4" fill="#383838"/><rect x="703.00" y="370.6" width="2" height="344.4" fill="#4e4e4e"/><rect x="703.00" y="292" width="2" height="7" fill="#555"/><rect x="703.00" y="316" width="2" height="7" fill="#555"/><rect x="703.00" y="340" width="2" height="7" fill="#555"/><rect x="703.00" y="364" width="2" height="7" fill="#555"/><rect x="722.35" y="370.6" width="1.3" height="344.4" fill="#383838"/><rect x="741.10" y="370.6" width="1.3" height="344.4" fill="#383838"/><rect x="759.85" y="370.6" width="1.3" height="344.4" fill="#383838"/><rect x="778.00" y="276" width="2" height="439" fill="#666"/><rect x="797.35" y="370.6" width="1.3" height="344.4" fill="#383838"/><rect x="816.10" y="370.6" width="1.3" height="344.4" fill="#383838"/><rect x="834.85" y="370.6" width="1.3" height="344.4" fill="#383838"/><rect x="853.00" y="370.6" width="2" height="344.4" fill="#4e4e4e"/><rect x="853.00" y="292" width="2" height="7" fill="#555"/><rect x="853.00" y="316" width="2" height="7" fill="#555"/><rect x="853.00" y="340" width="2" height="7" fill="#555"/><rect x="853.00" y="364" width="2" height="7" fill="#555"/><rect x="872.35" y="370.6" width="1.3" height="344.4" fill="#383838"/><rect x="891.10" y="370.6" width="1.3" height="344.4" fill="#383838"/><rect x="909.85" y="370.6" width="1.3" height="344.4" fill="#383838"/><rect x="928.00" y="370.6" width="2" height="344.4" fill="#4e4e4e"/><rect x="928.00" y="292" width="2" height="7" fill="#555"/><rect x="928.00" y="316" width="2" height="7" fill="#555"/><rect x="928.00" y="340" width="2" height="7" fill="#555"/><rect x="928.00" y="364" width="2" height="7" fill="#555"/><rect x="179" y="276" width="1.3" height="439" fill="#cfcfcf"/><path d="M179 275.5 L184 275.5 L179 282 Z" fill="#fff"/><rect x="181" y="302.5" width="37" height="17" rx="3" fill="#4f4f52"/><rect x="181" y="326.5" width="37" height="17" rx="3" fill="#4f4f52"/><rect x="181" y="350.5" width="37" height="17" rx="3" fill="#4f4f52"/></svg>
<div class="t" style="left:184px;top:305px;font-size:12px;color:#f0f0f0;">120.0</div>
<div class="t" style="left:184px;top:329px;font-size:12px;color:#f0f0f0;">C</div>
<div class="t" style="left:184px;top:353px;font-size:12px;color:#f0f0f0;">N</div>
<div class="t" style="left:184px;top:282px;font-size:14px;color:#fff;">1</div>
<div class="t" style="left:196.5px;top:281px;font-size:12px;color:#e8830c;font-weight:bold">B</div>
<div class="t" style="left:483px;top:282px;font-size:14px;color:#fff;">2</div>
<div class="t" style="left:783px;top:282px;font-size:14px;color:#fff;">3</div>
<svg style="left:0;top:0" width="962" height="752"><rect x="101" y="371" width="78" height="344" fill="#fff"/><rect x="179" y="371" width="1" height="344" fill="#b8b8b8"/><rect x="97" y="370.60" width="53.3" height="21.60" rx="3" fill="#000"/><rect x="97" y="435.40" width="53.3" height="21.60" rx="3" fill="#000"/><rect x="97" y="478.60" width="53.3" height="21.60" rx="3" fill="#000"/><rect x="97" y="521.80" width="53.3" height="21.60" rx="3" fill="#000"/><rect x="97" y="586.60" width="53.3" height="21.60" rx="3" fill="#000"/><rect x="97" y="629.80" width="53.3" height="21.60" rx="3" fill="#000"/><rect x="97" y="694.60" width="53.3" height="20.40" rx="3" fill="#000"/><rect x="101" y="374.85" width="78" height="1.5" fill="#000"/><path d="M176.5 374.85 L179 372.80 L179 378.40 L176.5 376.35 Z" fill="#000"/><rect x="101" y="412.65" width="78" height="1.5" fill="#000"/><path d="M176.5 412.65 L179 410.60 L179 416.20 L176.5 414.15 Z" fill="#000"/><rect x="101" y="449.85" width="78" height="1.5" fill="#000"/><path d="M176.5 449.85 L179 447.80 L179 453.40 L176.5 451.35 Z" fill="#000"/><rect x="101" y="487.95" width="78" height="1.5" fill="#000"/><path d="M176.5 487.95 L179 485.90 L179 491.50 L176.5 489.45 Z" fill="#000"/><rect x="101" y="525.65" width="78" height="1.5" fill="#000"/><path d="M176.5 525.65 L179 523.60 L179 529.20 L176.5 527.15 Z" fill="#000"/><rect x="101" y="563.75" width="78" height="1.5" fill="#000"/><path d="M176.5 563.75 L179 561.70 L179 567.30 L176.5 565.25 Z" fill="#000"/><rect x="101" y="601.55" width="78" height="1.5" fill="#000"/><path d="M176.5 601.55 L179 599.50 L179 605.10 L176.5 603.05 Z" fill="#000"/><rect x="101" y="633.55" width="78" height="1.5" fill="#000"/><path d="M176.5 633.55 L179 631.50 L179 637.10 L176.5 635.05 Z" fill="#000"/><rect x="101" y="671.95" width="78" height="1.5" fill="#000"/><path d="M176.5 671.95 L179 669.90 L179 675.50 L176.5 673.45 Z" fill="#000"/><rect x="101" y="709.45" width="78" height="1.5" fill="#000"/><path d="M176.5 709.45 L179 707.40 L179 713.00 L176.5 710.95 Z" fill="#000"/></svg>
<div style="position:absolute;left:101px;top:370px;width:78px;height:1px;background:#111;"></div>
<div class="t" style="left:157px;top:395.5px;font-size:13px;color:#111;">C5</div>
<div class="t" style="left:157px;top:654px;font-size:13px;color:#111;">C4</div>
<div style="position:absolute;left:97px;top:371px;width:4px;height:344px;background:#2a2a32;"></div>
<svg style="left:0;top:0" width="962" height="752">
<path d="M182.5 722 L190 717 L190 727.5 Z" fill="#e8830c"/>
<rect x="196" y="716" width="43" height="12" rx="5.5" fill="#e8830c"/>
<path d="M768 717 L776 722 L768 727.5 Z" fill="#e8830c"/>
<rect x="800" y="720" width="126" height="4" fill="#555"/>
<rect x="861" y="716" width="4" height="12" fill="#e8830c"/>
<path d="M949 382.5 L954 374.5 L959.5 382.5 Z" fill="#e8830c"/>
<rect x="948" y="446" width="12" height="26" rx="5.5" fill="#e8830c"/>
<path d="M949 536 L959.5 536 L954 543.5 Z" fill="#e8830c"/>
<rect x="952" y="568" width="4" height="125" fill="#555"/>
<rect x="948" y="629" width="12" height="4" fill="#e8830c"/>
</svg>
<svg style="left:0;top:0" width="962" height="752"><circle cx="785" cy="721.5" r="4.3" stroke="#fff" stroke-width="1.3" fill="none"/><line x1="788.096" y1="724.596" x2="791.296" y2="727.796" stroke="#fff" stroke-width="1.5"/><line x1="782.7" y1="721.5" x2="787.3" y2="721.5" stroke="#fff" stroke-width="1.2"/><circle cx="939.5" cy="721" r="4.3" stroke="#fff" stroke-width="1.3" fill="none"/><line x1="942.596" y1="724.096" x2="945.796" y2="727.296" stroke="#fff" stroke-width="1.5"/><line x1="937.2" y1="721" x2="941.8" y2="721" stroke="#fff" stroke-width="1.2"/><line x1="939.5" y1="718.7" x2="939.5" y2="723.3" stroke="#fff" stroke-width="1.2"/><circle cx="953" cy="554.5" r="4.3" stroke="#fff" stroke-width="1.3" fill="none"/><line x1="956.096" y1="557.596" x2="959.296" y2="560.796" stroke="#fff" stroke-width="1.5"/><line x1="950.7" y1="554.5" x2="955.3" y2="554.5" stroke="#fff" stroke-width="1.2"/><circle cx="953" cy="707" r="4.3" stroke="#fff" stroke-width="1.3" fill="none"/><line x1="956.096" y1="710.096" x2="959.296" y2="713.296" stroke="#fff" stroke-width="1.5"/><line x1="950.7" y1="707" x2="955.3" y2="707" stroke="#fff" stroke-width="1.2"/><line x1="953" y1="704.7" x2="953" y2="709.3" stroke="#fff" stroke-width="1.2"/></svg>
<svg style="left:0;top:0" width="962" height="752">
<path d="M0 744 L0 752 L9 752 L9 751 Q 1 751 1 743 Z" fill="#000"/>
<path d="M962 744 L962 752 L953 752 L953 751 Q 961 751 961 743 Z" fill="#000"/>
</svg></body></html>
